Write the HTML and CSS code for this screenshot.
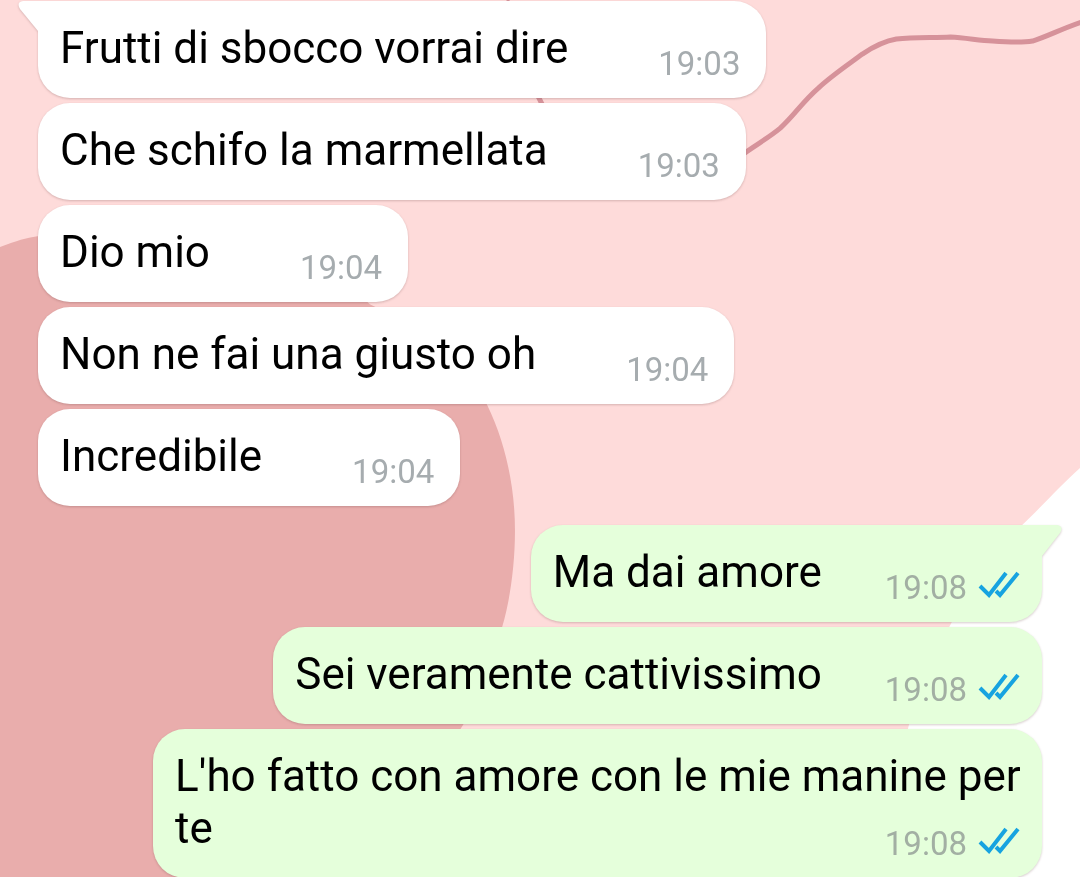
FILE: index.html
```html
<!DOCTYPE html>
<html lang="it">
<head>
    <meta charset="UTF-8">
    <meta name="viewport" content="width=device-width, initial-scale=1">
    <title>Chat</title>
    <link rel="stylesheet" href="styles.css">
</head>
<body>
    <svg class="wallpaper" viewBox="0 0 1080 877" preserveAspectRatio="xMidYMin slice" aria-hidden="true">
        <path class="blob" d="M0 247 C18 240 26 238 38 236 C110 221 180 224 240 239 C300 252 340 274 370 304 C430 332 463 363 487 404 C507 445 515 490 515 530 C515 565 510 600 502 627 C494 665 482 695 462 726 C425 785 380 835 320 877 L0 877 Z"/>
        <path class="corner" d="M1080 467 C1060 485 1045 502 1020 526 C992 556 966 590 950 624 C930 658 918 692 908 726 C896 775 890 825 890 877 L1080 877 Z"/>
        <path class="line" d="M500 -8 L510 0 M537 94 L542 104"/>
        <path class="line" d="M740 156 C755 145 768 138 780 128 C796 113 801 103 818 88 C832 75 850 63 862 54 C874 46 884 41 896 39 C914 37 935 38 950 37 C965 38 978 40 992 41 C1006 42 1020 43 1032 41 C1048 36 1060 29 1084 21"/>
    </svg>

    <svg class="symbols" aria-hidden="true">
        <symbol id="ticks" viewBox="0 0 42 28">
            <path d="M2 16 L11 25 L28 3 M18 21 L22 25 L40 3"/>
        </symbol>
    </svg>

    <main class="chat">
        <div class="group">
            <div class="message first">
                <svg class="tail" viewBox="0 0 22 32" aria-hidden="true"><path d="M22 0 H5 Q-2 1 2 8 L20 30 H22 Z"/></svg>
                <p>Frutti di sbocco vorrai dire<span class="meta"><time>19:03</time></span></p>
            </div>
            <div class="message">
                <p>Che schifo la marmellata<span class="meta"><time>19:03</time></span></p>
            </div>
            <div class="message">
                <p>Dio mio<span class="meta"><time>19:04</time></span></p>
            </div>
            <div class="message">
                <p>Non ne fai una giusto oh<span class="meta"><time>19:04</time></span></p>
            </div>
            <div class="message">
                <p>Incredibile<span class="meta"><time>19:04</time></span></p>
            </div>
        </div>

        <div class="group sent">
            <div class="message first">
                <svg class="tail" viewBox="0 0 22 32" aria-hidden="true"><path d="M0 0 H17 Q24 1 20 8 L2 31 H0 Z"/></svg>
                <p>Ma dai amore<span class="meta"><time>19:08</time><svg class="ticks" role="img" aria-label="Letto"><use href="#ticks"/></svg></span></p>
            </div>
            <div class="message">
                <p>Sei veramente cattivissimo<span class="meta"><time>19:08</time><svg class="ticks" role="img" aria-label="Letto"><use href="#ticks"/></svg></span></p>
            </div>
            <div class="message">
                <p>L'ho fatto con amore con le mie manine per te<span class="meta"><time>19:08</time><svg class="ticks" role="img" aria-label="Letto"><use href="#ticks"/></svg></span></p>
            </div>
        </div>
    </main>
</body>
</html>
```
FILE: styles.css
```css
* {
    box-sizing: border-box;
}

body {
    margin: 0;
    position: relative;
    min-height: 100vh;
    overflow: hidden;
    background-color: #fedbda;
    color: #000000;
    font-family: Roboto, "Noto Sans", sans-serif;
}

.wallpaper {
    position: absolute;
    top: 0;
    left: 0;
    width: 100%;
    height: 100%;
}

.blob {
    fill: #e9adac;
}

.corner {
    fill: #ffffff;
}

.line {
    fill: none;
    stroke: #d6929a;
    stroke-width: 5px;
}

.symbols {
    display: none;
}

.chat {
    position: relative;
    display: flex;
    flex-direction: column;
    gap: 19px;
    padding: 1px 38px 0;
}

.group {
    display: flex;
    flex-direction: column;
    align-items: flex-start;
    gap: 5px;
}

.sent {
    align-items: flex-end;
}

.message {
    position: relative;
    max-width: calc(100% - 115px);
    padding: 21px 16px 15px 22px;
    background-color: #ffffff;
    border-radius: 32px;
    filter: drop-shadow(0 1px 1px rgba(90, 50, 50, 0.25));
}

.message.first {
    border-top-left-radius: 0;
}

.sent .message {
    background-color: #e5ffdb;
}

.sent .message.first {
    border-top-left-radius: 32px;
    border-top-right-radius: 0;
}

.message p {
    display: flow-root;
    margin: 0;
    font-size: 44px;
    line-height: 52px;
}

/* sits at the end of the last line of text */
.meta {
    float: right;
    display: flex;
    gap: 11px;
    margin: 22px 10px 0 90px;
    color: #a6acaf;
    font-size: 33px;
    line-height: 39px;
}

.sent .meta {
    margin-right: 6px;
    margin-left: 63px;
    color: #a2afa3;
}

.ticks {
    width: 42px;
    height: 28px;
    margin-top: 2px;
    fill: none;
    stroke: #17a3e0;
    stroke-width: 4px;
}

.tail {
    position: absolute;
    top: 0;
    right: calc(100% - 2px);
    width: 22px;
    height: 32px;
    fill: #ffffff;
}

.sent .tail {
    right: auto;
    left: calc(100% - 2px);
    fill: #e5ffdb;
}
```
